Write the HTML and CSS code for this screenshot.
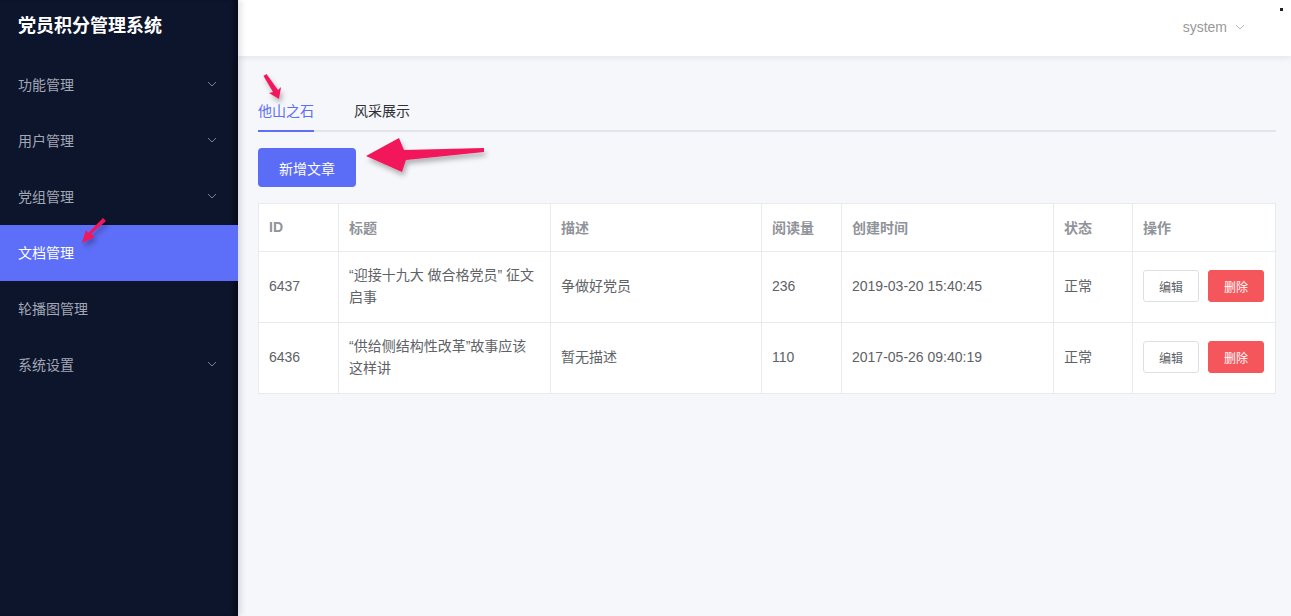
FILE: index.html
```html
<!DOCTYPE html>
<html lang="zh">
<head>
<meta charset="utf-8">
<title>党员积分管理系统</title>
<link rel="stylesheet" href="styles.css">
</head>
<body>
<div class="app">
  <aside class="sidebar">
    <div class="logo">党员积分管理系统</div>
    <ul class="menu">
      <li class="menu-item">功能管理<svg class="chev" viewBox="0 0 10 6"><path d="M1 1l4 4 4-4"/></svg></li>
      <li class="menu-item">用户管理<svg class="chev" viewBox="0 0 10 6"><path d="M1 1l4 4 4-4"/></svg></li>
      <li class="menu-item">党组管理<svg class="chev" viewBox="0 0 10 6"><path d="M1 1l4 4 4-4"/></svg></li>
      <li class="menu-item active">文档管理</li>
      <li class="menu-item">轮播图管理</li>
      <li class="menu-item">系统设置<svg class="chev" viewBox="0 0 10 6"><path d="M1 1l4 4 4-4"/></svg></li>
    </ul>
  </aside>
  <div class="main">
    <header class="header">
      <span class="user">system<svg class="chev user-chev" viewBox="0 0 10 6"><path d="M1 1l4 4 4-4"/></svg></span>
      <span class="dot"></span>
    </header>
    <section class="content">
      <div class="tabs">
        <div class="tab active">他山之石</div>
        <div class="tab">风采展示</div>
      </div>
      <button class="btn-primary">新增文章</button>
      <table class="table">
        <colgroup>
          <col style="width:80px"><col style="width:212px"><col style="width:211px"><col style="width:80px"><col style="width:212px"><col style="width:79px"><col>
        </colgroup>
        <thead>
          <tr><th>ID</th><th>标题</th><th>描述</th><th>阅读量</th><th>创建时间</th><th>状态</th><th>操作</th></tr>
        </thead>
        <tbody>
          <tr>
            <td>6437</td>
            <td>“迎接十九大 做合格党员” 征文启事</td>
            <td>争做好党员</td>
            <td>236</td>
            <td>2019-03-20 15:40:45</td>
            <td>正常</td>
            <td><div class="ops"><button class="btn-edit">编辑</button><button class="btn-del">删除</button></div></td>
          </tr>
          <tr>
            <td>6436</td>
            <td>“供给侧结构性改革”故事应该这样讲</td>
            <td>暂无描述</td>
            <td>110</td>
            <td>2017-05-26 09:40:19</td>
            <td>正常</td>
            <td><div class="ops"><button class="btn-edit">编辑</button><button class="btn-del">删除</button></div></td>
          </tr>
        </tbody>
      </table>
    </section>
  </div>
  <svg class="annot" viewBox="0 0 1291 616" width="1291" height="616">
    <defs>
      <filter id="sh" x="-20%" y="-20%" width="140%" height="160%">
        <feDropShadow dx="2" dy="4" stdDeviation="2.5" flood-color="#000" flood-opacity="0.28"/>
      </filter>
    </defs>
    <g fill="#f2155a" filter="url(#sh)">
      <path d="M484 148 L484 152 L406 160 L402 172 L366 156 L399 138 L404 150 Z"/>
      <path d="M263.5 76 L266.5 74 L278 90 L281 87 L279 99 L269 93 L273 92 Z"/>
      <path d="M103 218 L106 221 L91 234 L95 237 L82 243 L86 230 L88 233 Z"/>
    </g>
  </svg>
</div>
</body>
</html>
```
FILE: styles.css
```css
* { box-sizing: border-box; }
html, body { margin: 0; padding: 0; }
body {
  font-family: "Helvetica Neue", "Liberation Sans", "Noto Sans CJK SC", sans-serif;
  font-size: 14px;
  background: #f5f7fb;
  width: 1291px;
  height: 616px;
  overflow: hidden;
}
.app {
  position: relative;
  display: flex;
  height: 616px;
}
.sidebar {
  width: 238px;
  flex: none;
  background: #0c152c;
  box-shadow: inset -6px 0 4px -2px #060c1c, 3px 0 6px rgba(0, 10, 40, 0.12);
  height: 616px;
  position: relative;
  z-index: 2;
}
.logo {
  height: 57px;
  line-height: 53px;
  padding-left: 18px;
  color: #fff;
  font-size: 18px;
  font-weight: 700;
}
.menu {
  list-style: none;
  margin: 0;
  padding: 0;
}
.menu-item {
  height: 56px;
  display: flex;
  align-items: center;
  justify-content: space-between;
  padding: 0 21px 2px 18px;
  color: #a2a7b4;
  font-size: 14px;
}
.menu-item.active {
  background: #5d6ef8;
  color: #fff;
}
.chev {
  width: 10px;
  height: 6px;
  fill: none;
  stroke: #7b8191;
  stroke-width: 1;
}
.main {
  flex: 1;
  display: flex;
  flex-direction: column;
  min-width: 0;
}
.header {
  height: 56px;
  flex: none;
  background: #fff;
  box-shadow: 0 2px 6px rgba(0, 20, 60, 0.08);
  display: flex;
  align-items: center;
  justify-content: flex-end;
  padding-right: 46px;
  position: relative;
}
.user {
  color: #999;
  font-size: 14px;
  display: flex;
  align-items: center;
  gap: 8px;
  margin-top: -2px;
}
.user-chev { stroke: #bbb; }
.dot {
  position: absolute;
  right: 8px;
  top: 8px;
  width: 3px;
  height: 3px;
  background: #222;
}
.content {
  padding: 35px 15px 0 20px;
}
.tabs {
  display: flex;
  gap: 40px;
  border-bottom: 2px solid #e1e4ea;
  height: 41px;
}
.tab {
  height: 41px;
  line-height: 41px;
  color: #303133;
  font-size: 14px;
}
.tab.active {
  color: #5d6ef8;
  border-bottom: 2px solid #5d6ef8;
}
.btn-primary {
  display: block;
  margin-top: 16px;
  width: 98px;
  height: 39px;
  border: none;
  border-radius: 4px;
  background: #5b6cf6;
  color: #fff;
  font-family: inherit;
  font-size: 14px;
  padding: 0;
}
.table {
  margin-top: 16px;
  width: 1018px;
  border-collapse: collapse;
  table-layout: fixed;
  background: #fff;
  border: 1px solid #e8eaee;
}
.table th, .table td {
  border: 1px solid #e8eaee;
  text-align: left;
  padding: 0 10px;
  vertical-align: middle;
}
.table th {
  height: 48px;
  padding-bottom: 2px;
  color: #909399;
  font-weight: 700;
  font-size: 14px;
}
.table td {
  height: 71px;
  padding-bottom: 2px;
  color: #606266;
  font-size: 14px;
  line-height: 22px;
}
.ops {
  display: flex;
  gap: 9px;
}
.btn-edit, .btn-del {
  width: 56px;
  height: 32px;
  border-radius: 3px;
  font-family: inherit;
  font-size: 12px;
  padding: 0;
}
.btn-edit {
  background: #fff;
  border: 1px solid #dcdfe6;
  color: #606266;
}
.btn-del {
  background: #f5565b;
  border: 1px solid #f5565b;
  color: #fff;
}
.annot {
  position: absolute;
  left: 0;
  top: 0;
  pointer-events: none;
  z-index: 5;
}
```
